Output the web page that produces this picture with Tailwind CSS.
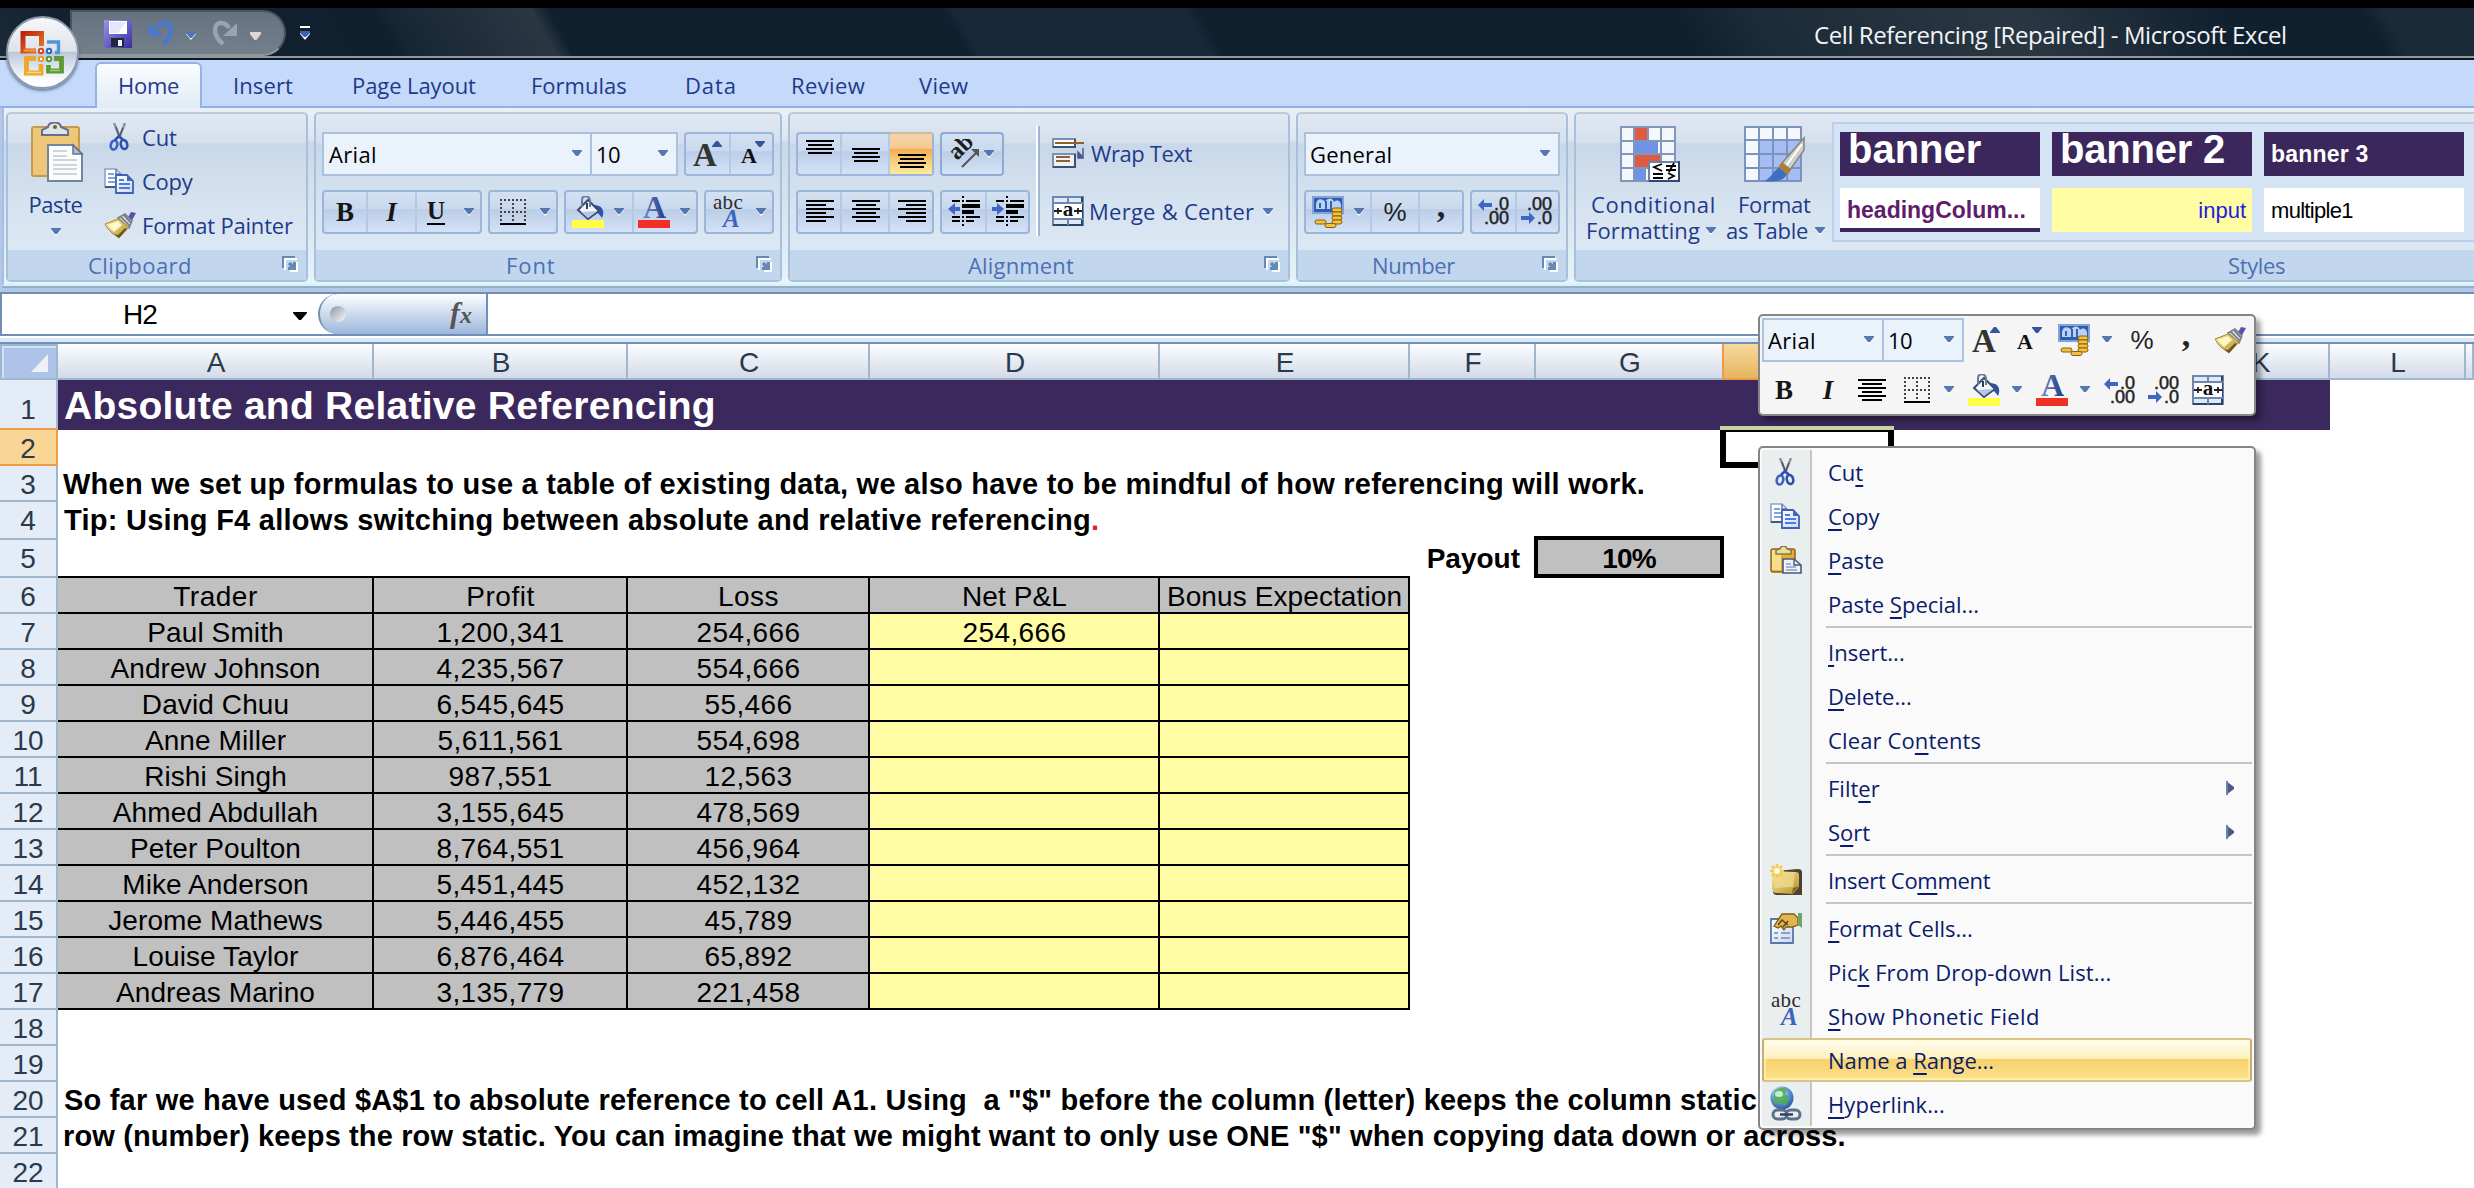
<!DOCTYPE html>
<html lang="en">
<head>
<meta charset="utf-8">
<title>Cell Referencing [Repaired] - Microsoft Excel</title>
<script src="https://cdn.jsdelivr.net/npm/@tailwindcss/browser@4"></script>
</head>
<body class="w-[2474px] h-[1188px] overflow-hidden bg-white">

<!-- Gradients used by the icons -->
<svg class="absolute w-0 h-0" aria-hidden="true">
  <defs>
    <linearGradient id="gPage" x1="0" y1="0" x2="1" y2="1"><stop offset="0" stop-color="#fff"/><stop offset="1" stop-color="#c9d9f5"/></linearGradient>
    <linearGradient id="gGold" x1="0" y1="0" x2="1" y2="1"><stop offset="0" stop-color="#f7eb9c"/><stop offset="1" stop-color="#b8912a"/></linearGradient>
    <linearGradient id="gA" x1="0" y1="0" x2="1" y2="0"><stop offset="0" stop-color="#6d88c4"/><stop offset="1" stop-color="#1f3a7e"/></linearGradient>
    <linearGradient id="gFloppy" x1="0" y1="0" x2="1" y2="1"><stop offset="0" stop-color="#9a94ec"/><stop offset="1" stop-color="#3a2d9c"/></linearGradient>
    <linearGradient id="gRed" x1="0" y1="0" x2="1" y2="1"><stop offset="0" stop-color="#b8260c"/><stop offset="1" stop-color="#ee7a22"/></linearGradient>
    <radialGradient id="gGlobe" cx=".4" cy=".3" r=".8"><stop offset="0" stop-color="#e9f6ff"/><stop offset=".5" stop-color="#5e93dc"/><stop offset="1" stop-color="#23479c"/></radialGradient>
  </defs>
</svg>

<!-- Shared icons, copied into place by the script below -->
<svg class="hidden" id="icons" aria-hidden="true">
  <symbol id="down" viewBox="0 0 10 8"><path d="M0 2h10L5 8z" fill="#fff"/><path d="M0 0h10v1L6 6H4L0 1z" fill="#5377b0"/></symbol>
  <symbol id="cut" viewBox="0 0 20 28"><path d="M5 0l6 15M16 0l-6 15" stroke="#8b929c" stroke-width="2.400" fill="none"/><path d="M7 4l4 11M14 5l-4 10" stroke="#4f5661" stroke-width="1.400" fill="none"/><ellipse cx="5" cy="22" rx="3.200" ry="4.600" fill="none" stroke="#3b62c0" stroke-width="2.600" transform="rotate(14 5 22)"/><ellipse cx="15" cy="21.500" rx="3.200" ry="4.600" fill="none" stroke="#2f4fae" stroke-width="2.600" transform="rotate(-14 15 21.500)"/><path d="M6 17l4-4 4 4" stroke="#2f4fae" stroke-width="2.600" fill="none"/></symbol>
  <symbol id="copy" viewBox="0 0 30 26"><path d="M1 1h11l5 5v13H1z" fill="#fff" stroke="#8da2cf" stroke-width="1.600"/><path d="M12 1v5h5" fill="none" stroke="#62789f" stroke-width="1.500"/><path d="M4 6h6M4 10h9M4 14h9" stroke="#7fa2e6" stroke-width="2"/><path d="M1 19h10" stroke="#41587f" stroke-width="2"/><path d="M12 7h11l6 6v12H12z" fill="url(#gPage)" stroke="#3f62b4" stroke-width="1.800"/><path d="M23 7v6h6z" fill="#4467b9"/><path d="M15 12h5M15 16h11M15 20h11" stroke="#4f7be0" stroke-width="2"/></symbol>
  <symbol id="brush" viewBox="0 0 32 28"><path d="M23 8l4-7 5 1-5 9z" fill="#5a50a8"/><path d="M14 7l7-4 7 7-3 7z" fill="#d5d8dd" stroke="#7b7f88" stroke-width="1.500"/><path d="M17 6l9 9M20 4l7 8" stroke="#70757e" stroke-width="1.600"/><path d="M14 8L1 13l3 5 4 4 7 5 10-11z" fill="url(#gGold)" stroke="#a88d3a" stroke-width="1"/><path d="M3 14l11-4 4 4-8 7z" fill="#fcf8c8"/><path d="M10 23l5 4 8-9-2-1-7 7z" fill="#6b5520"/></symbol>
  <symbol id="border" viewBox="0 0 26 26"><path d="M0 1h26M0 13h26" stroke="#444" stroke-width="2" stroke-dasharray="2 2"/><path d="M1 0v22M13 0v22M25 0v22" stroke="#444" stroke-width="2" stroke-dasharray="2 2"/><path d="M0 25h26" stroke="#000" stroke-width="2"/></symbol>
  <symbol id="bucket" viewBox="0 0 32 32"><path d="M22 9c9 0 11 7 8 13-3-4-5-7-9-8z" fill="#2c54ad"/><path d="M6 14L16 4l11 11-11 8z" fill="#f3f6fc" stroke="#3c4c6e" stroke-width="2"/><path d="M9 16l7 6 9-7z" fill="#b5c5e6"/><path d="M10 11V4c0-5 7-5 8 0v7" fill="none" stroke="#6b7c99" stroke-width="2"/><path d="M15 7v6" stroke="#333e55" stroke-width="2"/><path d="M0 24h32v8H0z" fill="#ffff4a"/></symbol>
  <symbol id="fontcolor" viewBox="0 0 32 32"><text x="16.500" y="21.500" text-anchor="middle" font-family="Liberation Serif, serif" font-weight="bold" font-size="32" fill="url(#gA)">A</text><path d="M0 24h32v8H0z" fill="#ef3022"/></symbol>
  <symbol id="phonetic" viewBox="0 0 30 32"><text x="0" y="13" font-family="Liberation Serif, serif" font-size="21" font-weight="normal" letter-spacing="0.300" fill="#2b2b2b">abc</text><text x="10" y="31" font-family="Liberation Serif, serif" font-style="italic" font-weight="bold" font-size="25" fill="#3c63bd">A</text></symbol>
  <symbol id="coins" viewBox="0 0 32 32"><path d="M0 0h32v18H0z" fill="#2f5bb0"/><path d="M1 1h30v16H1z" fill="none" stroke="#9dbce9" stroke-width="1.500"/><path d="M4 13V9c0-7 7-7 9-3 3-5 8-4 9 0 3-3 7-1 7 3v4z" fill="#b9d1f2"/><path d="M14 5v8M19 5v8M8 7v5" stroke="#3563b8" stroke-width="2"/><g fill="#f3c13c" stroke="#8a5f12" stroke-width="1"><rect x="20" y="12" width="10" height="4" rx="2"/><rect x="20" y="16" width="10" height="4" rx="2"/><rect x="20" y="20" width="10" height="4" rx="2"/><rect x="20" y="24" width="10" height="4" rx="2"/><rect x="3" y="24" width="11" height="4" rx="2"/><rect x="13" y="27.500" width="11" height="4" rx="2"/></g></symbol>
  <symbol id="decInc" viewBox="0 0 32 28"><path d="M0 8l6-6v4h8v4H6v4z" fill="#3f66c4"/><text x="31" y="13" text-anchor="end" font-family="Liberation Sans, sans-serif" font-weight="normal" font-size="18" fill="#222" stroke="#222" stroke-width=".5">.0</text><text x="31" y="27" text-anchor="end" font-family="Liberation Sans, sans-serif" font-weight="normal" font-size="18" fill="#222" stroke="#222" stroke-width=".5">.00</text></symbol>
  <symbol id="decDec" viewBox="0 0 32 28"><path d="M14 21l-6-6v4H0v4h8v4z" fill="#3f66c4"/><text x="31" y="13" text-anchor="end" font-family="Liberation Sans, sans-serif" font-weight="normal" font-size="18" fill="#222" stroke="#222" stroke-width=".5">.00</text><text x="31" y="27" text-anchor="end" font-family="Liberation Sans, sans-serif" font-weight="normal" font-size="18" fill="#222" stroke="#222" stroke-width=".5">.0</text></symbol>
  <symbol id="merge" viewBox="0 0 32 30"><path d="M1 1h30v28H1z" fill="#dfe9f8" stroke="#6d86ad" stroke-width="2"/><path d="M30 1v28H1" fill="none" stroke="#2c4468" stroke-width="2"/><path d="M1 7h30M1 23h30M16 1v6M16 23v6" stroke="#6d86ad" stroke-width="2"/><path d="M2 8h28v14H2z" fill="#fff"/><text x="16" y="20" text-anchor="middle" font-family="Liberation Serif, serif" font-weight="bold" font-size="21" fill="#111">a</text><path d="M2 15h8M30 15h-8M6 12v6M26 12v6" stroke="#222" stroke-width="1.800"/></symbol>
  <symbol id="launch" viewBox="0 0 16 16"><path d="M3 14V3h12" fill="none" stroke="#fff" stroke-width="2"/><path d="M1 12V1h12" fill="none" stroke="#6489b6" stroke-width="2"/><path d="M15 6v9H8" fill="none" stroke="#fff" stroke-width="2"/><path d="M6 14v-3h2L6 8l2-2 3 2V6h3v8z" fill="#6489b6"/></symbol>
  <symbol id="center" viewBox="0 0 28 22"><path d="M0 1h28M4 5h20M0 9h28M4 13h20M0 17h28M4 21h20" stroke="#000" stroke-width="2"/></symbol>
</svg>

<div class="relative flex flex-col w-[2474px] h-[1188px] overflow-hidden font-['Open_Sans',sans-serif] text-[22px] leading-[30px] text-[#1e3a8a]">

  <!-- Title bar -->
  <div class="h-2 shrink-0 bg-black"></div>
  <header class="h-[52px] shrink-0 flex items-start border-b-2 border-[#10161e] bg-[linear-gradient(60deg,#1c2a38_0%,#122231_3%,#10202f_16%,#172635_16.600%,#2a3743_22.300%,#10202f_23%,#10202f_38.800%,#192838_39.200%,#192838_48.400%,#10202f_49%,#10202f_68%,#1c2b39_71%,#2a3743_81.500%,#1c2a39_86%,#10202f_90%,#10202f_95.500%,#1b2a38_96.300%,#1b2a38_100%)]">
    <div class="w-full h-[50px] border-b-2 border-[#8f979f] flex items-start">
      <div class="ml-[70px] mt-[2px] w-[216px] h-[46px] border-2 border-[#4a525c] border-b-[#8f979f] rounded-r-full rounded-tl-[4px] bg-linear-to-b from-[#66727f] to-[#73808c] flex items-start pt-[8px] pl-[32px]">
        <svg class="w-[28px] h-[28px]" viewBox="0 0 28 28"><path d="M0 0h28v28H2l-2-2z" fill="url(#gFloppy)"/><path d="M5 1h18v13H5z" fill="#fff"/><path d="M6 2h16l-8 11H6z" fill="#e3e9fb"/><path d="M7 18h13v9H7z" fill="#222540"/><path d="M14 20h4v6h-4z" fill="#f2f2fa"/></svg>
        <svg class="ml-[17px] w-[26px] h-[26px]" viewBox="0 0 26 26"><path d="M8 8C12 1 22 1 22 10c0 5-3 10-8 14" fill="none" stroke="#4a78cf" stroke-width="4.500"/><path d="M0 3v13h14z" fill="#4a78cf"/></svg>
        <svg class="ml-[11px] mt-[12px] w-[10px] h-[8px]"><use href="#down"/></svg>
        <svg class="ml-[16px] w-[26px] h-[26px]" viewBox="0 0 26 26"><path d="M17 8C13 1 3 1 3 10c0 5 3 10 8 14" fill="none" stroke="#96a5b6" stroke-width="4.500"/><path d="M25 3v13H11z" fill="#96a5b6"/></svg>
        <svg class="ml-[12px] mt-[12px] w-[11px] h-[8px]" viewBox="0 0 11 8"><path d="M0 0h11v2L6.500 8h-2L0 2z" fill="#dcd9d4"/></svg>
      </div>
      <svg class="ml-[14px] mt-[18px] w-[10px] h-[14px]" viewBox="0 0 10 14"><path d="M0 1h10" stroke="#fff" stroke-width="2"/><path d="M0 7h10v1l-5 6-5-6z" fill="#fff"/><path d="M0 5h10v2l-4 4H4L0 7z" fill="#3a62b0"/></svg>
      <h1 class="ml-[1504px] mt-[10px] text-[24px] leading-[34px] tracking-[-0.42px] text-[#f2f4f6] whitespace-nowrap">Cell Referencing [Repaired] - Microsoft Excel</h1>
    </div>
  </header>

  <!-- Office button -->
  <div class="absolute left-[6px] top-[16px] size-[73px] rounded-full border-2 border-[#8c9aac] shadow-[0_2px_3px_rgba(40,60,100,.6)] bg-[linear-gradient(180deg,#f6f7f9_0%,#dfe3ea_48%,#bcc7da_50%,#dfe6f0_72%,#ffffff_92%)]">
    <svg class="size-[69px]" viewBox="8 18 69 69" fill="none">
      <path d="M41.500 46V33.500H23V51h13" stroke="url(#gRed)" stroke-width="5"/><path d="M23.500 50.500h12" stroke="#f0a03c" stroke-width="2"/>
      <path d="M47 42h11.500v10.500H55" stroke="#4c97d8" stroke-width="3.400"/>
      <path d="M36 58.500H26.500V73H41V64" stroke="#f0a62a" stroke-width="4.800"/><path d="M27 72.500h14" stroke="#fbd97c" stroke-width="1.500"/>
      <path d="M54 58.500h7.500V71H48.500v-6" stroke="#5d9a33" stroke-width="4.800"/><path d="M50 70.500h10" stroke="#a5cf6c" stroke-width="1.400"/>
      <g fill="#fff" stroke-width="2"><circle cx="41" cy="51" r="2.200" stroke="#d8481e"/><circle cx="49" cy="51" r="2.200" stroke="#2c6cc0"/><circle cx="41" cy="59" r="2.200" stroke="#ee9a22"/><circle cx="49" cy="59" r="2.200" stroke="#579a34"/></g>
    </svg>
  </div>

  <!-- Tabs -->
  <nav class="h-[48px] shrink-0 flex items-end bg-[#c5d9fb] border-b-2 border-[#8fb2e3] whitespace-nowrap">
    <div class="ml-[95px] mb-[-2px] w-[107px] h-[46px] pl-[21px] pt-[6px] rounded-t-[6px] border-2 border-b-0 border-[#93b3e2] bg-linear-to-b from-[#fafdff] to-[#e1eaf6] tracking-[-0.27px]">Home</div>
    <div class="ml-[31px] w-[119px] h-[36px] tracking-[0.11px]">Insert</div>
    <div class="w-[179px] h-[36px] tracking-[-0.09px]">Page Layout</div>
    <div class="w-[154px] h-[36px]">Formulas</div>
    <div class="w-[106px] h-[36px] tracking-[0.9px]">Data</div>
    <div class="w-[128px] h-[36px] tracking-[0.4px]">Review</div>
    <div class="h-[36px] tracking-[0.3px]">View</div>
  </nav>

  <!-- Ribbon -->
  <div class="h-[184px] shrink-0 pl-[2px] bg-[#b3c8e6]">
    <div class="h-[178px] pt-[4px] pl-[2px] flex gap-[6px] overflow-hidden border-l-2 border-b-2 border-l-[#a6bfe2] border-b-[#cdf5fc] bg-[linear-gradient(180deg,#e9f0f8_0%,#dbe6f2_18%,#c9d8ea_20%,#e6f3fa_100%)]">

      <!-- Clipboard -->
      <section class="w-[302px] h-[170px] shrink-0 rounded-[5px] border-2 border-[#a9c0da] border-t-[#bccbdc] flex flex-col bg-[linear-gradient(180deg,#e1e8f2_0%,#d5e0ed_17%,#c8d7e9_18%,#d5e2ef_52%,#dce8f4_82%)]">
        <div class="h-[136px] flex">
          <div class="w-[95px] pt-[8px] flex flex-col items-center">
            <svg class="w-[54px] h-[62px] ml-[4px]" viewBox="0 0 54 62"><rect x="1" y="5" width="47" height="49" rx="2" fill="#eec678" stroke="#c39a4e" stroke-width="2"/><path d="M11 13V8l6-3c1-6 12-6 13 0l7 3v5z" fill="#dfe4eb" stroke="#667284" stroke-width="2"/><circle cx="24" cy="5" r="2" fill="#7b5f2c"/><path d="M17 23h25l9 9v27H17z" fill="#fbfcfe" stroke="#73849f" stroke-width="2"/><path d="M42 23v9h9z" fill="#aebfd4" stroke="#62748e" stroke-width="1.500"/><path d="M22 29h14M22 34h14M22 38h24M22 43h24M22 47h24M22 52h24" stroke="#cfd3da" stroke-width="2"/></svg>
            <span class="mt-[5px] tracking-[-0.45px]">Paste</span>
            <svg class="mt-[9px] w-[10px] h-[8px]"><use href="#down"/></svg>
          </div>
          <div class="pt-px whitespace-nowrap">
            <div class="h-[44px] flex items-center"><svg class="ml-[6px] w-[20px] h-[28px]"><use href="#cut"/></svg><span class="ml-[13px] tracking-[-0.17px]">Cut</span></div>
            <div class="h-[44px] flex items-center"><svg class="ml-px w-[30px] h-[26px]"><use href="#copy"/></svg><span class="ml-[8px] tracking-[-0.28px]">Copy</span></div>
            <div class="h-[44px] flex items-center"><svg class="ml-px w-[32px] h-[28px]"><use href="#brush"/></svg><span class="ml-[6px] tracking-[-0.19px]">Format Painter</span></div>
          </div>
        </div>
        <footer class="h-[30px] flex justify-between bg-[#c2d7ee] text-[#4d70b3]"><span class="ml-[80px] tracking-[0.46px]">Clipboard</span><svg class="mr-[8px] mt-[6px] w-[16px] h-[16px]"><use href="#launch"/></svg></footer>
      </section>

      <!-- Font -->
      <section class="w-[468px] h-[170px] shrink-0 rounded-[5px] border-2 border-[#a9c0da] border-t-[#bccbdc] flex flex-col bg-[linear-gradient(180deg,#e1e8f2_0%,#d5e0ed_17%,#c8d7e9_18%,#d5e2ef_52%,#dce8f4_82%)]">
        <div class="h-[136px] pt-[18px] pl-[6px] flex flex-col gap-[14px]">
          <div class="flex">
            <div class="w-[270px] h-[44px] border-2 border-[#abc1de] bg-[#eaf2fb] text-black flex items-center justify-between pl-[5px] pr-[8px]"><span class="tracking-[0.33px]">Arial</span><svg class="w-[10px] h-[8px]"><use href="#down"/></svg></div>
            <div class="w-[86px] h-[44px] border-2 border-l-0 border-[#abc1de] bg-[#eaf2fb] text-black flex items-center justify-between pl-[4px] pr-[8px]"><span class="tracking-[-0.5px]">10</span><svg class="w-[10px] h-[8px]"><use href="#down"/></svg></div>
            <div class="ml-[6px] w-[90px] h-[44px] rounded-[4px] border-2 border-[#9cb6da] flex bg-[linear-gradient(180deg,#d3e1f2_0%,#c9d9ee_42%,#bccde8_44%,#d3e2f6_100%)]">
              <div class="w-[45px] border-r-2 border-[#b5c9e5] relative"><span class="absolute left-[7px] top-[4px] font-['Liberation_Serif',serif] font-bold text-[33px] leading-[34px] text-[#333]">A</span><svg class="absolute left-[26px] top-[7px] w-[10px] h-[6px]" viewBox="0 0 10 6"><path d="M0 6h10V5L6 0H4L0 5z" fill="#34569f"/></svg></div>
              <div class="relative"><span class="absolute left-[10px] top-[9px] font-['Liberation_Serif',serif] font-bold text-[22px] leading-[26px] text-[#111]">A</span><svg class="absolute left-[24px] top-[7px] w-[10px] h-[6px]" viewBox="0 0 10 6"><path d="M0 0h10v1L6 6H4L0 1z" fill="#34569f"/></svg></div>
            </div>
          </div>
          <div class="flex gap-[6px]">
            <div class="w-[160px] h-[44px] rounded-[4px] border-2 border-[#9cb6da] flex items-stretch bg-[linear-gradient(180deg,#d3e1f2_0%,#c9d9ee_42%,#bccde8_44%,#d3e2f6_100%)] font-['Liberation_Serif',serif] text-[27px] leading-[40px] text-[#151515]">
              <div class="w-[44px] border-r-2 border-[#b5c9e5] text-center font-bold">B</div>
              <div class="w-[49px] border-r-2 border-[#b5c9e5] text-center italic font-bold">I</div>
              <div class="flex items-center pl-[10px]"><span class="w-[18px] h-[26px] text-[25px] leading-[24px] font-bold border-b-2 border-black">U</span><svg class="ml-[19px] w-[10px] h-[8px]"><use href="#down"/></svg></div>
            </div>
            <div class="w-[70px] h-[44px] rounded-[4px] border-2 border-[#9cb6da] flex items-center pl-[10px] bg-[linear-gradient(180deg,#d3e1f2_0%,#c9d9ee_42%,#bccde8_44%,#d3e2f6_100%)]"><svg class="w-[26px] h-[26px]"><use href="#border"/></svg><svg class="ml-[14px] w-[10px] h-[8px]"><use href="#down"/></svg></div>
            <div class="w-[134px] h-[44px] rounded-[4px] border-2 border-[#9cb6da] flex items-center bg-[linear-gradient(180deg,#d3e1f2_0%,#c9d9ee_42%,#bccde8_44%,#d3e2f6_100%)]">
              <div class="w-[68px] h-full border-r-2 border-[#b5c9e5] flex items-center pl-[6px]"><svg class="w-[32px] h-[32px]"><use href="#bucket"/></svg><svg class="ml-[10px] w-[10px] h-[8px]"><use href="#down"/></svg></div>
              <svg class="ml-[4px] w-[32px] h-[32px]"><use href="#fontcolor"/></svg><svg class="ml-[10px] w-[10px] h-[8px]"><use href="#down"/></svg>
            </div>
            <div class="w-[70px] h-[44px] rounded-[4px] border-2 border-[#9cb6da] flex items-center pl-[7px] bg-[linear-gradient(180deg,#d3e1f2_0%,#c9d9ee_42%,#bccde8_44%,#d3e2f6_100%)]"><svg class="w-[30px] h-[32px]"><use href="#phonetic"/></svg><svg class="ml-[13px] w-[10px] h-[8px]"><use href="#down"/></svg></div>
          </div>
        </div>
        <footer class="h-[30px] flex justify-between bg-[#c2d7ee] text-[#4d70b3]"><span class="ml-[190px] tracking-[0.9px]">Font</span><svg class="mr-[8px] mt-[6px] w-[16px] h-[16px]"><use href="#launch"/></svg></footer>
      </section>

      <!-- Alignment -->
      <section class="w-[502px] h-[170px] shrink-0 rounded-[5px] border-2 border-[#a9c0da] border-t-[#bccbdc] flex flex-col bg-[linear-gradient(180deg,#e1e8f2_0%,#d5e0ed_17%,#c8d7e9_18%,#d5e2ef_52%,#dce8f4_82%)]">
        <div class="h-[136px] pl-[6px] flex">
          <div class="w-[234px] pt-[18px] flex flex-col gap-[14px]">
            <div class="flex gap-[6px]">
              <div class="w-[138px] h-[44px] rounded-[4px] border-2 border-[#9cb6da] flex bg-[linear-gradient(180deg,#d3e1f2_0%,#c9d9ee_42%,#bccde8_44%,#d3e2f6_100%)]">
                <div class="w-[44px] border-r-2 border-[#b5c9e5] pl-[8px] pt-[6px]"><svg class="w-[28px] h-[14px]" viewBox="0 0 28 14"><path d="M0 1h28M2 5h24M0 9h28M2 13h24" stroke="#000" stroke-width="2"/></svg></div>
                <div class="w-[48px] border-r-2 border-[#b5c9e5] pl-[10px] pt-[14px]"><svg class="w-[28px] h-[14px]" viewBox="0 0 28 14"><path d="M0 1h28M2 5h24M0 9h28M2 13h24" stroke="#000" stroke-width="2"/></svg></div>
                <div class="w-[42px] mt-[-2px] pl-[8px] pt-[22px] bg-[linear-gradient(180deg,#cdb08f_0%,#f3d5ac_8%,#f5c98f_38%,#f1ac57_42%,#f8cf7b_70%,#fdea9c_100%)]"><svg class="w-[28px] h-[14px]" viewBox="0 0 28 14"><path d="M0 1h28M2 5h24M0 9h28M2 13h24" stroke="#000" stroke-width="2"/></svg></div>
              </div>
              <div class="w-[64px] h-[44px] rounded-[4px] border-2 border-[#8fabd4] flex items-center pl-[6px] bg-[linear-gradient(180deg,#d3e1f2_0%,#c9d9ee_42%,#bccde8_44%,#d3e2f6_100%)]">
                <svg class="w-[34px] h-[30px]" viewBox="0 0 34 30"><text x="9" y="22" transform="rotate(-45 9 22)" font-family="Liberation Serif, serif" font-weight="bold" font-size="24" fill="#1d1d1d">ab</text><path d="M14 28l14-14" stroke="#5d5555" stroke-width="2.200"/><path d="M31 10v8l-8-8z" fill="#5d5555"/></svg>
                <svg class="ml-[2px] w-[10px] h-[8px]"><use href="#down"/></svg>
              </div>
            </div>
            <div class="flex gap-[6px]">
              <div class="w-[138px] h-[44px] rounded-[4px] border-2 border-[#9cb6da] flex bg-[linear-gradient(180deg,#d3e1f2_0%,#c9d9ee_42%,#bccde8_44%,#d3e2f6_100%)]">
                <div class="w-[44px] border-r-2 border-[#b5c9e5] pl-[8px] pt-[8px]"><svg class="w-[28px] h-[22px]" viewBox="0 0 28 22"><path d="M0 1h28M0 5h20M0 9h28M0 13h20M0 17h28M0 21h20" stroke="#000" stroke-width="2"/></svg></div>
                <div class="w-[48px] border-r-2 border-[#b5c9e5] pl-[10px] pt-[8px]"><svg class="w-[28px] h-[22px]"><use href="#center"/></svg></div>
                <div class="pl-[8px] pt-[8px]"><svg class="w-[28px] h-[22px]" viewBox="0 0 28 22"><path d="M0 1h28M8 5h20M0 9h28M8 13h20M0 17h28M8 21h20" stroke="#000" stroke-width="2"/></svg></div>
              </div>
              <div class="w-[90px] h-[44px] rounded-[4px] border-2 border-[#9cb6da] flex bg-[linear-gradient(180deg,#d3e1f2_0%,#c9d9ee_42%,#bccde8_44%,#d3e2f6_100%)]">
                <div class="w-[45px] border-r-2 border-[#b5c9e5] pl-[6px] pt-[4px]"><svg class="w-[32px] h-[30px]" viewBox="0 0 32 30"><path d="M4 5h8M4 21h8M4 25h8M18 5h14M18 21h14M18 25h8" stroke="#000" stroke-width="2"/><path d="M14 8h18v4H14zM14 14h12v4H14z"/><path d="M14 0h2v2h-2zM14 4h2v2h-2zM14 20h2v2h-2zM14 24h2v2h-2zM14 28h2v2h-2z"/><path d="M0 13l7-6v4h5v4H7v4z" fill="#3f66c4"/></svg></div>
                <div class="pl-[5px] pt-[4px]"><svg class="w-[32px] h-[30px]" viewBox="0 0 32 30"><path d="M4 5h8M4 21h8M4 25h8M18 5h14M18 21h14M18 25h8" stroke="#000" stroke-width="2"/><path d="M14 8h18v4H14zM14 14h12v4H14z"/><path d="M14 0h2v2h-2zM14 4h2v2h-2zM14 20h2v2h-2zM14 24h2v2h-2zM14 28h2v2h-2z"/><path d="M12 13L5 7v4H0v4h5v4z" fill="#3f66c4"/></svg></div>
              </div>
            </div>
          </div>
          <div class="ml-[6px] mt-[12px] w-[4px] h-[110px] border-l-2 border-white bg-[#9cb6d8]"></div>
          <div class="pl-[12px] pt-[24px] whitespace-nowrap">
            <div class="flex"><svg class="w-[32px] h-[30px]" viewBox="0 0 32 30"><path d="M1 1h22v8H1z" fill="#fff" stroke="#7c8fae" stroke-width="2"/><path d="M23 1v8H1" fill="none" stroke="#3c5272" stroke-width="2"/><path d="M3 5h29" stroke="#93602c" stroke-width="2"/><path d="M1 16h22v13H1z" fill="#eef3fb" stroke="#7c8fae" stroke-width="2"/><path d="M23 16v13H1" fill="none" stroke="#3c5272" stroke-width="2"/><path d="M4 19h14M4 23h14" stroke="#93602c" stroke-width="2"/><path d="M31 10v8M26 14v6h6z" stroke="#4a5a86" stroke-width="1.500" fill="#4a5a86"/></svg><span class="ml-[7px] tracking-[-0.39px]">Wrap Text</span></div>
            <div class="mt-[28px] flex"><svg class="w-[32px] h-[30px]"><use href="#merge"/></svg><span class="ml-[5px] tracking-[0.25px]">Merge &amp; Center</span><svg class="ml-[9px] mt-[12px] w-[10px] h-[8px]"><use href="#down"/></svg></div>
          </div>
        </div>
        <footer class="h-[30px] flex justify-between bg-[#c2d7ee] text-[#4d70b3]"><span class="ml-[178px] tracking-[0.17px]">Alignment</span><svg class="mr-[8px] mt-[6px] w-[16px] h-[16px]"><use href="#launch"/></svg></footer>
      </section>

      <!-- Number -->
      <section class="w-[272px] h-[170px] shrink-0 rounded-[5px] border-2 border-[#a9c0da] border-t-[#bccbdc] flex flex-col bg-[linear-gradient(180deg,#e1e8f2_0%,#d5e0ed_17%,#c8d7e9_18%,#d5e2ef_52%,#dce8f4_82%)]">
        <div class="h-[136px] pt-[18px] pl-[6px] flex flex-col gap-[14px]">
          <div class="w-[256px] h-[44px] border-2 border-[#abc1de] bg-[#eaf2fb] text-black flex items-center justify-between pl-[4px] pr-[8px]"><span class="tracking-[0.2px]">General</span><svg class="w-[10px] h-[8px]"><use href="#down"/></svg></div>
          <div class="flex gap-[6px]">
            <div class="w-[160px] h-[44px] rounded-[4px] border-2 border-[#9cb6da] flex bg-[linear-gradient(180deg,#d3e1f2_0%,#c9d9ee_42%,#bccde8_44%,#d3e2f6_100%)] text-[#222]">
              <div class="w-[66px] border-r-2 border-[#b5c9e5] flex items-center pl-[6px]"><svg class="w-[32px] h-[32px]"><use href="#coins"/></svg><svg class="ml-[10px] w-[10px] h-[8px]"><use href="#down"/></svg></div>
              <div class="w-[48px] border-r-2 border-[#b5c9e5] text-center font-['Liberation_Sans',sans-serif] text-[26px] leading-[40px]">%</div>
              <div class="flex-1 text-center font-['Liberation_Serif',serif] font-bold text-[34px] leading-[20px] pt-[4px]">,</div>
            </div>
            <div class="w-[90px] h-[44px] rounded-[4px] border-2 border-[#9cb6da] flex bg-[linear-gradient(180deg,#d3e1f2_0%,#c9d9ee_42%,#bccde8_44%,#d3e2f6_100%)]">
              <div class="w-[45px] border-r-2 border-[#b5c9e5] pl-[6px] pt-[5px]"><svg class="w-[32px] h-[28px]"><use href="#decInc"/></svg></div>
              <div class="pl-[4px] pt-[5px]"><svg class="w-[32px] h-[28px]"><use href="#decDec"/></svg></div>
            </div>
          </div>
        </div>
        <footer class="h-[30px] flex justify-between bg-[#c2d7ee] text-[#4d70b3]"><span class="ml-[74px] tracking-[-0.4px]">Number</span><svg class="mr-[8px] mt-[6px] w-[16px] h-[16px]"><use href="#launch"/></svg></footer>
      </section>

      <!-- Styles -->
      <section class="flex-1 h-[170px] rounded-l-[5px] border-2 border-r-0 border-[#a9c0da] border-t-[#bccbdc] flex flex-col bg-[linear-gradient(180deg,#e1e8f2_0%,#d5e0ed_17%,#c8d7e9_18%,#d5e2ef_52%,#dce8f4_82%)]">
        <div class="h-[136px] flex whitespace-nowrap">
          <div class="w-[150px] pt-[12px] leading-[26px]">
            <svg class="ml-[44px] w-[60px] h-[56px]" viewBox="0 0 60 56"><path d="M1 1h54v54H1z" fill="#f4f7fc"/><path d="M14 0h14v14H14z" fill="#de5a43"/><path d="M14 14h24v14H14z" fill="#6f93e4"/><path d="M14 28h26v14H14z" fill="#de5a43"/><path d="M14 42h12v14H14z" fill="#6f93e4"/><path d="M1 1h54v54H1zM14 1v54M28 1v13M41 1v54M1 15h54M1 28h54M1 42h54" fill="none" stroke="#8097bd" stroke-width="2"/><path d="M29 36h30v19H29z" fill="#fff" stroke="#6c83a6" stroke-width="2"/><path d="M59 35v20H29" fill="none" stroke="#33496b" stroke-width="2"/><path d="M42 38l-8 3 8 4M33 48h10M33 52h10M46 40h10M46 44h10M54 37l-5 9M48 47l6 3-6 3" fill="none" stroke="#000" stroke-width="1.800"/></svg>
            <div class="mt-[9px] pl-[15px] tracking-[0.68px]">Conditional</div>
            <div class="flex pl-[10px]"><span class="tracking-[0.12px]">Formatting</span><svg class="ml-[6px] mt-[10px] w-[10px] h-[8px]"><use href="#down"/></svg></div>
          </div>
          <div class="w-[106px] pt-[12px] leading-[26px]">
            <svg class="ml-[18px] w-[62px] h-[56px]" viewBox="0 0 62 56"><path d="M1 1h56v54H1z" fill="#f4f7fc"/><path d="M15 14h42v41H15z" fill="#a5bdf2"/><path d="M1 1h56v54H1zM15 1v54M29 1v54M43 1v54M1 14h56M1 28h56M1 42h56" fill="none" stroke="#7a93bf" stroke-width="2"/><path d="M60 12v12L46 44l-8-7z" fill="#cfcfcb" stroke="#86857f" stroke-width="1.500"/><path d="M58 18L42 40" stroke="#fff" stroke-width="2"/><path d="M20 55c8-3 8-10 16-14l7 7c-4 8-12 8-23 7z" fill="#3f6fc4"/><path d="M38 36l9 7-3 6-10-8z" fill="#a9803a"/></svg>
            <div class="mt-[9px] pl-[12px] tracking-[-0.23px]">Format</div>
            <div class="flex"><span class="tracking-[-0.25px]">as Table</span><svg class="ml-[7px] mt-[10px] w-[10px] h-[8px]"><use href="#down"/></svg></div>
          </div>
          <div class="flex-1 mt-[8px] h-[120px] border-2 border-r-0 border-[#b9cfea] bg-[#d4e4f5] pl-[6px] pt-[8px] grid grid-cols-[200px_200px_200px] auto-rows-[44px] gap-[12px] font-['Liberation_Sans',sans-serif] font-bold">
            <div class="bg-[#3b275b] text-white text-[40px] leading-[34px] pl-[8px]">banner</div>
            <div class="bg-[#3b275b] text-white text-[40px] leading-[34px] pl-[8px] tracking-[-0.2px]">banner 2</div>
            <div class="bg-[#3b275b] text-white text-[23px] leading-[45px] pl-[7px] tracking-[0.2px]">banner 3</div>
            <div class="bg-white text-[#5f1d6b] text-[23px] leading-[45px] border-b-4 border-[#3b275b] pl-[7px]">headingColum...</div>
            <div class="bg-[#fffca4] text-[#1d1de0] font-normal leading-[45px] text-right pr-[6px]">input</div>
            <div class="bg-white text-black font-normal leading-[45px] pl-[7px] tracking-[-0.7px]">multiple1</div>
          </div>
        </div>
        <footer class="h-[30px] pl-[652px] bg-[#c2d7ee] text-[#4d70b3] tracking-[-0.37px]">Styles</footer>
      </section>
    </div>
    <div class="h-[2px] bg-[#9badc6]"></div>
  </div>

  <!-- Formula bar -->
  <div class="h-[44px] shrink-0 border-2 border-r-0 border-[#6f8fb5] bg-white flex items-center text-black font-['Liberation_Sans',sans-serif]">
    <div class="w-[316px] h-full flex items-center"><span class="ml-[121px] mt-[2px] text-[28px] leading-[38px] tracking-[-1px]">H2</span><svg class="ml-auto mr-[11px] mt-[4px] w-[14px] h-[8px]" viewBox="0 0 14 8"><path d="M0 0h14v1L8 8H6L0 1z"/></svg></div>
    <div class="w-[170px] h-full rounded-l-full border-l-2 border-r-2 border-[#6f8fb5] bg-linear-to-b from-[#fdfeff] via-[#cddaee] to-[#9db7dd] flex items-center pl-[10px] pr-[14px]"><i class="size-[16px] rounded-full bg-linear-to-br from-[#8f97a5] to-[#fafafa]"></i><span class="ml-auto font-['Liberation_Serif',serif] italic font-bold text-[30px] leading-[36px] text-[#555]">f<span class="text-[24px]">x</span></span></div>
  </div>
  <div class="h-[8px] shrink-0 border-t-2 border-b-2 border-t-white border-b-[#6f8fb5] bg-[#dbe8f7]"></div>

  <!-- Sheet -->
  <main id="sheet" class="flex flex-col font-['Liberation_Sans',sans-serif] text-[28px] leading-[32px] text-black whitespace-nowrap"></main>

  <!-- Selected cell H2 -->
  <div class="absolute left-[1720px] top-[426px] w-[174px] h-[42px] border-[6px] border-black bg-white"></div>
  <div class="absolute left-[1720px] top-[426px] w-[174px] h-[4px] bg-[#c6d5a2]"></div>

  <!-- Mini toolbar -->
  <div class="absolute left-[1758px] top-[314px] w-[498px] h-[102px] rounded-[5px] border-2 border-[#868686] bg-[#f5f5f5] shadow-[5px_5px_5px_rgba(0,0,0,.35)] pl-[2px] pt-[2px] text-black">
    <div class="flex h-[44px]">
      <div class="w-[122px] h-[44px] border-2 border-[#abc1de] bg-[#eaf2fb] flex items-center justify-between pl-[4px] pr-[8px]"><span class="tracking-[0.33px]">Arial</span><svg class="w-[10px] h-[8px]"><use href="#down"/></svg></div>
      <div class="w-[80px] h-[44px] border-2 border-l-0 border-[#abc1de] bg-[#eaf2fb] flex items-center justify-between pl-[4px] pr-[8px]"><span class="tracking-[-0.5px]">10</span><svg class="w-[10px] h-[8px]"><use href="#down"/></svg></div>
      <div class="w-[44px] relative"><span class="absolute left-[8px] top-[6px] font-['Liberation_Serif',serif] font-bold text-[33px] leading-[34px] text-[#333]">A</span><svg class="absolute left-[26px] top-[9px] w-[10px] h-[6px]" viewBox="0 0 10 6"><path d="M0 6h10V5L6 0H4L0 5z" fill="#34569f"/></svg></div>
      <div class="w-[44px] relative"><span class="absolute left-[9px] top-[11px] font-['Liberation_Serif',serif] font-bold text-[22px] leading-[26px] text-[#111]">A</span><svg class="absolute left-[24px] top-[9px] w-[10px] h-[6px]" viewBox="0 0 10 6"><path d="M0 0h10v1L6 6H4L0 1z" fill="#34569f"/></svg></div>
      <div class="w-[68px] flex items-center pl-[6px]"><svg class="w-[32px] h-[32px]"><use href="#coins"/></svg><svg class="ml-[12px] w-[10px] h-[8px]"><use href="#down"/></svg></div>
      <div class="w-[44px] text-center font-['Liberation_Sans',sans-serif] text-[26px] leading-[44px] text-[#222]">%</div>
      <div class="w-[44px] text-center font-['Liberation_Serif',serif] font-bold text-[34px] leading-[20px] pt-[7px] text-[#222]">,</div>
      <div class="w-[44px] flex items-center justify-center"><svg class="w-[32px] h-[28px]"><use href="#brush"/></svg></div>
    </div>
    <div class="flex items-center h-[44px] mt-[6px] font-['Liberation_Serif',serif] text-[27px] font-bold text-[#151515]">
      <div class="w-[44px] text-center">B</div>
      <div class="w-[44px] text-center italic">I</div>
      <div class="w-[44px] pl-[8px]"><svg class="w-[28px] h-[22px]"><use href="#center"/></svg></div>
      <div class="w-[68px] flex items-center pl-[10px]"><svg class="w-[26px] h-[26px]"><use href="#border"/></svg><svg class="ml-[14px] w-[10px] h-[8px]"><use href="#down"/></svg></div>
      <div class="w-[68px] flex items-center pl-[6px]"><svg class="w-[32px] h-[32px]"><use href="#bucket"/></svg><svg class="ml-[12px] w-[10px] h-[8px]"><use href="#down"/></svg></div>
      <div class="w-[68px] flex items-center pl-[6px]"><svg class="w-[32px] h-[32px]"><use href="#fontcolor"/></svg><svg class="ml-[12px] w-[10px] h-[8px]"><use href="#down"/></svg></div>
      <div class="w-[44px] pl-[6px]"><svg class="w-[32px] h-[28px]"><use href="#decInc"/></svg></div>
      <div class="w-[44px] pl-[6px]"><svg class="w-[32px] h-[28px]"><use href="#decDec"/></svg></div>
      <div class="w-[44px] pl-[6px]"><svg class="w-[32px] h-[30px]"><use href="#merge"/></svg></div>
    </div>
  </div>

  <!-- Context menu -->
  <div class="absolute left-[1758px] top-[446px] w-[498px] h-[684px] rounded-[5px] border-2 border-[#868686] shadow-[5px_5px_5px_rgba(0,0,0,.4)] p-[2px] bg-[#fafafa] text-[#0b1b6b] whitespace-nowrap">
    <div class="h-[676px] bg-[linear-gradient(90deg,#e9eeee_48px,#c5c5c5_48px,#c5c5c5_50px,#fafafa_50px)] flex flex-col [&_u]:underline-offset-[4px] [&_u]:decoration-2">
      <div class="h-[44px] flex items-center"><div class="w-[66px] pl-[13px]"><svg class="w-[20px] h-[28px]"><use href="#cut"/></svg></div><span>Cu<u>t</u></span></div>
      <div class="h-[44px] flex items-center"><div class="w-[66px] pl-[8px]"><svg class="w-[30px] h-[26px]"><use href="#copy"/></svg></div><span><u>C</u>opy</span></div>
      <div class="h-[44px] flex items-center"><div class="w-[66px] pl-[8px]"><svg class="w-[32px] h-[28px]" viewBox="0 0 32 28"><rect x="1" y="3" width="24" height="23" rx="2" fill="#e8ab34" stroke="#96651a" stroke-width="1.500"/><path d="M2 4h9v20H2z" fill="#f6df8c"/><path d="M6 8V4l4-1c1-4 6-4 7 0l4 1v4z" fill="#e9dfa4" stroke="#8b7838" stroke-width="1.500"/><path d="M13 13h11l7 6v8H13z" fill="#eef2f9" stroke="#46597c" stroke-width="1.600"/><path d="M24 13v6h7" fill="none" stroke="#46597c" stroke-width="1.400"/><path d="M16 18h5M16 21h10M16 24h11" stroke="#8ba0c5" stroke-width="1.500"/></svg></div><span><u>P</u>aste</span></div>
      <div class="h-[44px] flex items-center"><div class="w-[66px]"></div><span>Paste <u>S</u>pecial...</span></div>
      <div class="h-[4px] ml-[64px] border-t-2 border-[#c5c5c5]"></div>
      <div class="h-[44px] flex items-center"><div class="w-[66px]"></div><span><u>I</u>nsert...</span></div>
      <div class="h-[44px] flex items-center"><div class="w-[66px]"></div><span><u>D</u>elete...</span></div>
      <div class="h-[44px] flex items-center"><div class="w-[66px]"></div><span class="tracking-[0.13px]">Clear Co<u>n</u>tents</span></div>
      <div class="h-[4px] ml-[64px] border-t-2 border-[#c5c5c5]"></div>
      <div class="h-[44px] flex items-center"><div class="w-[66px]"></div><span>Filt<u>e</u>r</span><svg class="ml-auto mr-[18px] w-[8px] h-[14px]" viewBox="0 0 8 14"><path d="M0 0l8 6v2l-8 6z" fill="#4e5a82"/><path d="M0 0h2v14H0z" fill="#6a80bd"/></svg></div>
      <div class="h-[44px] flex items-center"><div class="w-[66px]"></div><span>S<u>o</u>rt</span><svg class="ml-auto mr-[18px] w-[8px] h-[14px]" viewBox="0 0 8 14"><path d="M0 0l8 6v2l-8 6z" fill="#4e5a82"/><path d="M0 0h2v14H0z" fill="#6a80bd"/></svg></div>
      <div class="h-[4px] ml-[64px] border-t-2 border-[#c5c5c5]"></div>
      <div class="h-[44px] flex items-center"><div class="w-[66px] pl-[8px]"><svg class="w-[32px] h-[32px]" viewBox="0 0 32 32"><path d="M6 7l22-2c2 0 4 1 4 3v23H7c-2 0-4-1-4-3z" fill="#4d4030"/><path d="M2 7l24 1c2 0 3 1 3 3v12l-6 7-17-1c-2 0-4-2-4-4z" fill="url(#gGold)"/><path d="M3 8h22l-2 15-18 1z" fill="#eeda8c" opacity=".8"/><path d="M29 22l-6 2-1 6z" fill="#7f6420"/><path d="M7 0v14M0 7h14M2 2l10 10M12 2L2 12" stroke="#f0cd50" stroke-width="2.500"/><circle cx="7" cy="7" r="3" fill="#fffde0"/></svg></div><span class="tracking-[-0.31px]">Insert Co<u>m</u>ment</span></div>
      <div class="h-[4px] ml-[64px] border-t-2 border-[#c5c5c5]"></div>
      <div class="h-[44px] flex items-center"><div class="w-[66px] pl-[8px]"><svg class="w-[32px] h-[32px]" viewBox="0 0 32 32"><path d="M1 7h22v24H1z" fill="url(#gPage)" stroke="#5a76a8" stroke-width="1.800"/><path d="M4 21h4M11 21h9M4 26h4M11 26h9" stroke="#8a9fc6" stroke-width="2"/><path d="M4 14L12 2h12l4 4v7l-6 2h-6l-2 3-3-4-3 2z" fill="#e5b452" stroke="#7b5c1e" stroke-width="1.300"/><path d="M8 13l4-5 6 5M13 15l5-6" stroke="#5f4514" stroke-width="1.500" fill="none"/><path d="M28 1h4v15l-4-3z" fill="#6aa86a"/></svg></div><span><u>F</u>ormat Cells...</span></div>
      <div class="h-[44px] flex items-center"><div class="w-[66px]"></div><span class="tracking-[0.1px]">Pic<u>k</u> From Drop-down List...</span></div>
      <div class="h-[44px] flex items-center"><div class="w-[66px] pl-[9px]"><svg class="w-[30px] h-[32px] -mt-[12px]"><use href="#phonetic"/></svg></div><span class="tracking-[0.34px]"><u>S</u>how Phonetic Field</span></div>
      <div class="h-[44px] w-[490px] rounded-[3px] border-2 border-[#d9c487] border-x-[#c9ad72] shadow-[inset_0_0_0_2px_rgba(255,250,200,.55)] flex items-center bg-[linear-gradient(180deg,#fffdf0_0%,#fdf0bd_46%,#f8d26b_48%,#fbe08c_100%)]"><div class="w-[64px]"></div><span>Name a <u>R</u>ange...</span></div>
      <div class="h-[44px] flex items-center"><div class="w-[66px] pl-[8px]"><svg class="w-[32px] h-[36px]" viewBox="0 0 32 36"><circle cx="12" cy="12" r="11.500" fill="url(#gGlobe)"/><path d="M5 5c4-4 9-4 12-2l-2 5 5 4-5 8-5-3-5 1-2-6z" fill="#4fae4c" opacity=".85"/><ellipse cx="9" cy="8" rx="4" ry="3" fill="#e4fbe0" opacity=".8"/><rect x="3" y="24" width="14" height="9" rx="4.500" fill="none" stroke="#5c708c" stroke-width="3"/><rect x="16" y="24" width="14" height="9" rx="4.500" fill="none" stroke="#5c708c" stroke-width="3"/><path d="M10 28.500h13" stroke="#31425c" stroke-width="2.500"/></svg></div><span class="tracking-[0.11px]"><u>H</u>yperlink...</span></div>
    </div>
  </div>
</div>

<script>
  // Column widths and row heights in pixels, gridline included
  const cols = {A:316,B:254,C:242,D:290,E:250,F:126,G:188,H:170,I:148,J:150,K:138,L:136,M:8};
  const heights = {1:50,4:38,5:38};
  const data = [
    ['Trader','Profit','Loss','Net P&L','Bonus Expectation'],
    ['Paul Smith','1,200,341','254,666','254,666',''],
    ['Andrew Johnson','4,235,567','554,666','',''],
    ['David Chuu','6,545,645','55,466','',''],
    ['Anne Miller','5,611,561','554,698','',''],
    ['Rishi Singh','987,551','12,563','',''],
    ['Ahmed Abdullah','3,155,645','478,569','',''],
    ['Peter Poulton','8,764,551','456,964','',''],
    ['Mike Anderson','5,451,445','452,132','',''],
    ['Jerome Mathews','5,446,455','45,789','',''],
    ['Louise Taylor','6,876,464','65,892','',''],
    ['Andreas Marino','3,135,779','221,458','','']
  ];
  const esc = s => s.replace(/&/g,'&amp;');
  const names = Object.keys(cols);

  let html = '<div class="flex h-[36px] text-[#2b3a4a]"><div class="w-[58px] border-2 border-[#9eb6ce] bg-[#adc3e8] shadow-[inset_2px_2px_0_#d3e0f5] flex items-end justify-end pr-[8px] pb-[6px]"><svg class="w-[17px] h-[18px]" viewBox="0 0 17 18"><path d="M17 0v18H0z" fill="#eef1f5"/></svg></div>';
  for (const n of names) {
    html += `<div class="border-r-2 border-b-2 text-center leading-[37px] pl-[2px] ${n === 'H' ? 'border-[#ef9a45] bg-linear-to-b from-[#f8d8a0] to-[#e4b65c]' : n === 'G' ? 'border-[#9eb6ce] border-r-[#ef9a45] bg-linear-to-b from-[#fbfcfe] to-[#d3dbe9]' : 'border-[#9eb6ce] bg-linear-to-b from-[#fbfcfe] to-[#d3dbe9]'}" style="width:${cols[n]}px">${n === 'M' ? '' : n}</div>`;
  }
  html += '</div>';

  const row = r => {
    if (r === 1) return '<div class="w-[2272px] bg-[#3b285c] text-white font-bold text-[39px] leading-[52px] pl-[6px] tracking-[0.25px]">Absolute and Relative Referencing</div>';
    if (r === 3) return '<div class="font-bold text-[29px] pl-[5px] pt-[2px] tracking-[0.24px]">When we set up formulas to use a table of existing data, we also have to be mindful of how referencing will work.</div>';
    if (r === 4) return '<div class="font-bold text-[29px] pl-[6px] pt-[2px] tracking-[0.26px]">Tip: Using F4 allows switching between absolute and relative referencing<span class="text-[#e0202a]">.</span></div>';
    if (r === 5) return '<div class="w-[1352px] border-b-2 border-black"></div><div class="w-[124px] pr-[14px] pt-[3px] text-right font-bold">Payout</div><div class="w-[190px] mt-[-4px] border-4 border-black bg-[#c0c0c0] text-center font-bold leading-[37px] tracking-[-0.8px]">10%</div>';
    if (r === 20) return '<div class="font-bold text-[29px] pl-[6px] pt-[2px] tracking-[0.2px] whitespace-pre">So far we have used $A$1 to absolute reference to cell A1. Using  a "$" before the column (letter) keeps the column static</div>';
    if (r === 21) return '<div class="font-bold text-[29px] pl-[5px] pt-[2px] tracking-[0.13px]">row (number) keeps the row static. You can imagine that we might want to only use ONE "$" when copying data down or across.</div>';
    if (r >= 6 && r <= 17) return data[r-6].map((t,i) =>
      `<div class="text-center pt-[3px] pl-[1px] border-r-2 border-b-2 border-black ${r > 6 && i > 2 ? 'bg-[#fffca4]' : 'bg-[#c0c0c0]'} ${i && r > 6 ? 'tracking-[0.38px]' : r === 6 && i < 3 ? 'tracking-[0.5px]' : 'tracking-[0.1px]'}" style="width:${cols[names[i]]}px">${esc(t)}</div>`).join('');
    return '';
  };
  for (let r = 1; r <= 22; r++) {
    const head = r === 2 ? 'bg-[#f9d596] border-[#ef9a45]' : r === 1 ? 'bg-[#e4ecf7] border-[#9eb6ce] border-b-[#ef9a45]' : 'bg-[#e4ecf7] border-[#9eb6ce]';
    html += `<div class="flex" style="height:${heights[r] || 36}px"><div class="w-[58px] shrink-0 border-r-2 border-b-2 text-center text-[#2b3a4a] ${head} ${r === 1 ? 'pt-[14px]' : 'pt-[3px]'}">${r}</div><div class="flex">${row(r)}</div></div>`;
  }
  sheet.innerHTML = html;

  // Put each shared icon's drawing into the svg that names it
  document.querySelectorAll('use').forEach(u => {
    const icon = document.querySelector(u.getAttribute('href')), svg = u.parentNode;
    svg.setAttribute('viewBox', icon.getAttribute('viewBox'));
    svg.innerHTML = icon.innerHTML;
  });
  document.getElementById('icons').remove();
</script>
</body>
</html>
